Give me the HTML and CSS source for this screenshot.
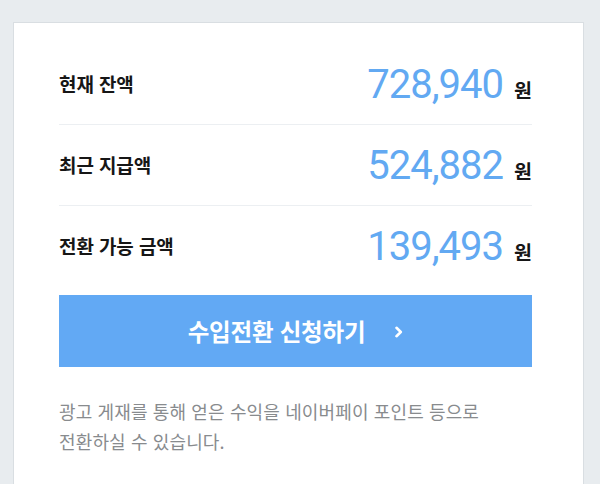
FILE: index.html
```html
<!DOCTYPE html>
<html lang="ko">
<head>
<meta charset="utf-8">
<link rel="stylesheet" href="styles.css">
</head>
<body>
<div class="card">
  <ul class="rows">
    <li class="row">
      <span class="label">현재 잔액</span>
      <span class="amount"><span class="num">728,940</span><span class="unit">원</span></span>
    </li>
    <li class="row">
      <span class="label">최근 지급액</span>
      <span class="amount"><span class="num">524,882</span><span class="unit">원</span></span>
    </li>
    <li class="row">
      <span class="label">전환 가능 금액</span>
      <span class="amount"><span class="num">139,493</span><span class="unit">원</span></span>
    </li>
  </ul>
  <a class="btn" href="#">
    <span class="btn-text">수입전환 신청하기</span>
    <svg class="chev" width="9" height="12" viewBox="0 0 9 12"><polyline points="2.5,1.8 6.8,6 2.5,10.2" fill="none" stroke="#fff" stroke-width="2.6" stroke-linecap="round" stroke-linejoin="round"/></svg>
  </a>
  <p class="desc">광고 게재를 통해 얻은 수익을 네이버페이 포인트 등으로<br>전환하실 수 있습니다.</p>
</div>
</body>
</html>
```
FILE: styles.css
```css
html, body {
  margin: 0;
  padding: 0;
  background: #e8ecef;
  height: 100%;
  overflow: hidden;
}
body {
  padding: 22px 16px 0 13px;
  box-sizing: border-box;
  font-family: "Noto Sans CJK KR", "Noto Sans", sans-serif;
}
.card {
  background: #fff;
  border: 1px solid #d9dee2;
  border-bottom: none;
  height: 100%;
  box-sizing: border-box;
  padding: 21px 51px 0 45px;
}
.rows {
  list-style: none;
  margin: 0;
  padding: 0;
}
.row {
  height: 81px;
  display: flex;
  align-items: center;
  justify-content: space-between;
  border-bottom: 1px solid #eceff2;
  box-sizing: border-box;
}
.row:last-child {
  border-bottom: none;
}
.label {
  font-size: 19px;
  font-weight: 700;
  color: #161616;
  letter-spacing: -0.1px;
  margin-top: -2px;
}
.amount {
  display: flex;
  align-items: baseline;
}
.num {
  font-family: Roboto, "Liberation Sans", sans-serif;
  font-size: 40px;
  font-weight: 400;
  color: #62a9f2;
  letter-spacing: -1px;
}
.unit {
  font-size: 19.5px;
  font-weight: 700;
  color: #161616;
  margin-left: 11px;
}
.btn {
  margin-top: 8px;
  height: 72px;
  background: #62a9f4;
  display: flex;
  align-items: center;
  justify-content: center;
  text-decoration: none;
  gap: 29px;
}
.btn-text {
  color: #fff;
  font-size: 23.5px;
  font-weight: 700;
  letter-spacing: -0.2px;
}
.chev {
  display: block;
  margin-top: 1px;
}
.desc {
  margin: 29px 0 0;
  font-size: 18px;
  line-height: 30px;
  color: #888b8e;
  letter-spacing: 0.13px;
}
```
